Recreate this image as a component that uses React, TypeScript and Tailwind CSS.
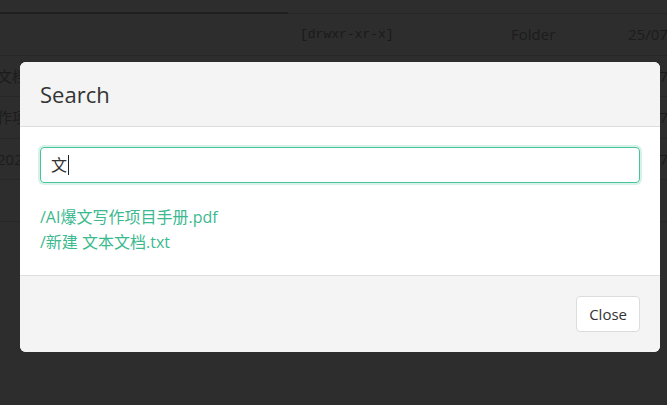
const rows = [
  { name: '', perm: '[drwxr-xr-x]', type: 'Folder', date: '25/07/2025' },
  { name: '文档.txt', perm: '[-rw-r--r--]', type: 'File', date: '25/07/2025' },
  { name: '作项目手册.pdf', perm: '[-rw-r--r--]', type: 'File', date: '25/07/2025' },
  { name: '2025-07-25.log', perm: '[-rw-r--r--]', type: 'File', date: '25/07/2025' },
  { name: '', perm: '', type: '', date: '' },
];

const results = ['/AI爆文写作项目手册.pdf', '/新建 文本文档.txt'];

export default function App() {
  return (
    <div
      className="relative h-[405px] w-[667px] overflow-hidden bg-[#2d2d2d]"
      style={{ fontFamily: '"Open Sans", "Noto Sans CJK SC", sans-serif' }}
    >
      {/* page behind the backdrop */}
      <div className="h-[12px]" />
      <div className="flex">
        <div className="h-[2px] w-[288px] bg-[#1f1f1f]" />
        <div className="mt-[1px] h-[1px] flex-1 bg-[#262626]" />
      </div>
      {rows.map((r, i) => (
        <div key={i} className="flex h-[41.5px] items-center border-b border-[#262626] text-[15px] text-[#1c1c1c]">
          <div className="ml-[-3px] w-[303px] shrink-0 whitespace-nowrap">{r.name}</div>
          <div className="w-[211px] shrink-0 font-['Liberation_Mono',monospace] text-[13px] text-[#1a1a1a]">{r.perm}</div>
          <div className="w-[117px] shrink-0">{r.type}</div>
          <div className="shrink-0 whitespace-nowrap">{r.date}</div>
        </div>
      ))}

      {/* modal */}
      <div className="absolute left-[20px] top-[62px] w-[640px] overflow-hidden rounded-[6px] bg-white">
        <div className="border-b border-[#dedede] bg-[#f4f4f4] px-[20px] pb-[20px] pt-[20px]">
          <h4 className="text-[22px] leading-[24px] text-[#333]">Search</h4>
        </div>
        <div className="px-[20px] pb-[20px] pt-[20px]">
          <div className="flex h-[36px] items-center rounded-[4px] border border-[#49c49a] px-[10px] shadow-[0_0_0_2px_rgba(73,196,154,0.22)]">
            <span className="text-[16px] leading-none text-[#333]">文</span>
            <span className="ml-[1px] h-[20px] w-[1px] bg-[#222]" />
          </div>
          <div className="mt-[22px] text-[16px] leading-[25px] text-[#3cb98f]">
            {results.map((r) => (
              <div key={r}>{r}</div>
            ))}
          </div>
        </div>
        <div className="flex justify-end border-t border-[#dedede] bg-[#f4f4f4] px-[20px] py-[20px]">
          <button className="h-[36px] rounded-[4px] border border-[#dcdcdc] bg-white px-[12px] text-[15px] text-[#333]">
            Close
          </button>
        </div>
      </div>
    </div>
  );
}
